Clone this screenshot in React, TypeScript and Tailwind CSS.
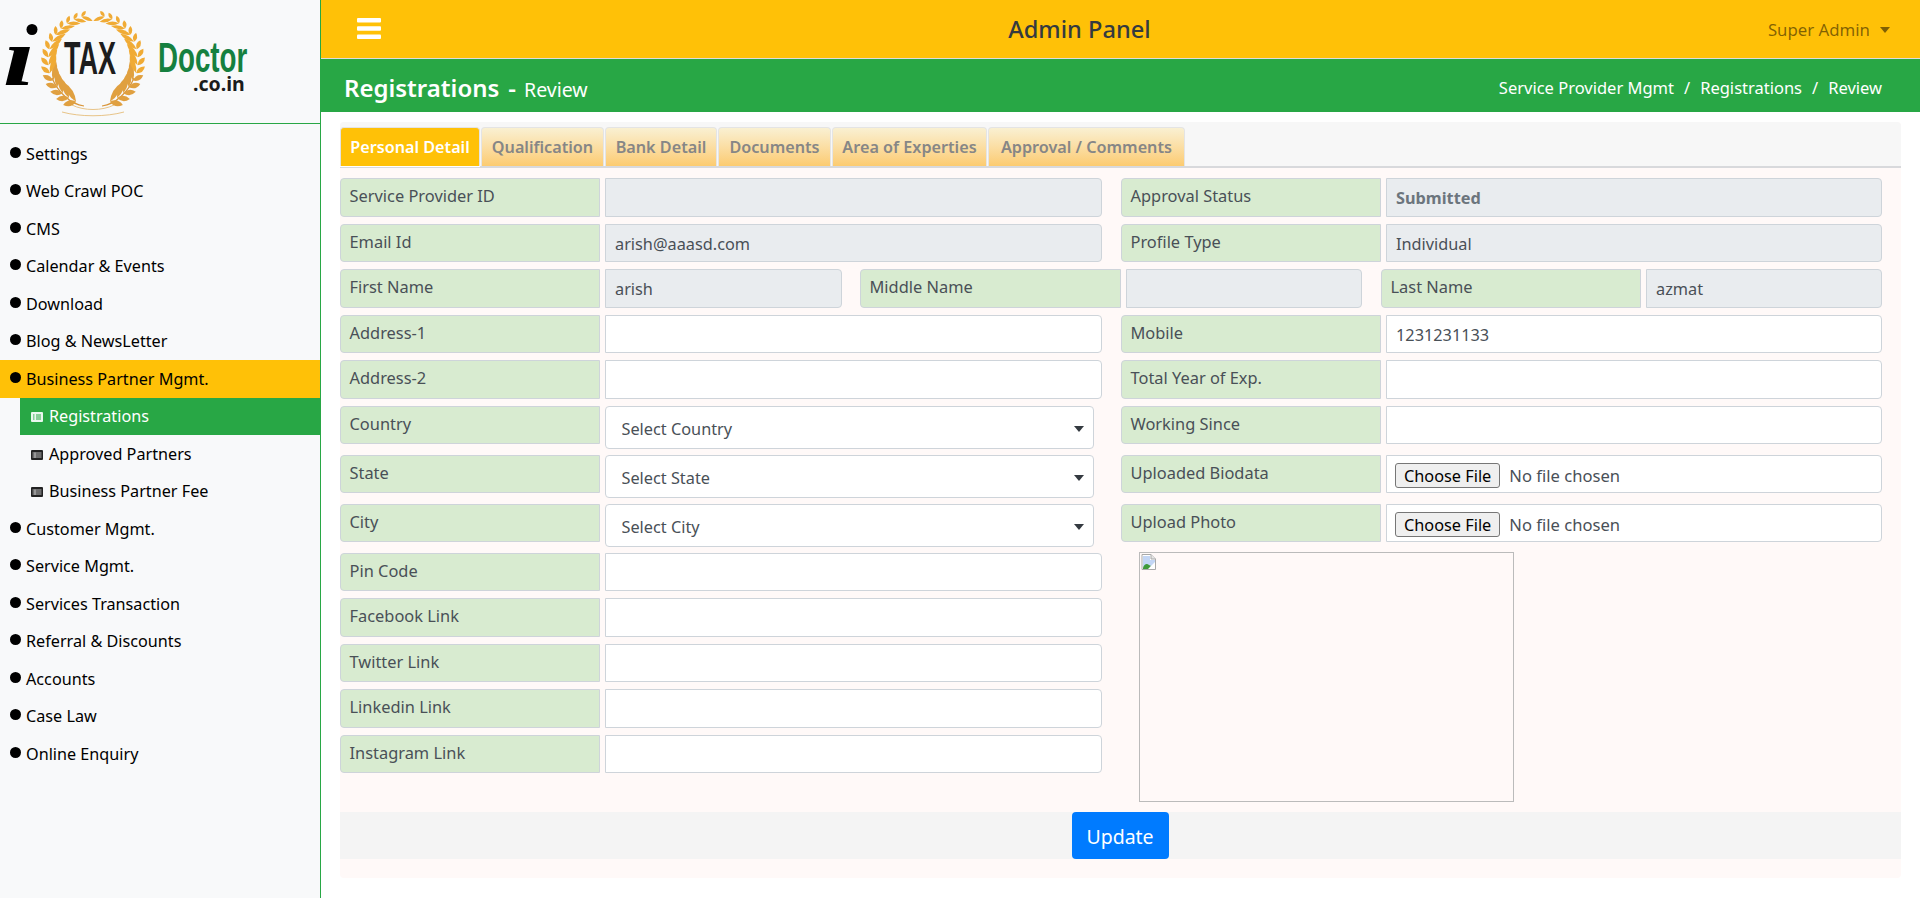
import React from "react";

const FONT = "[font-family:'Noto_Sans','Open_Sans',sans-serif]";

const menu: { label: string; active?: boolean; children?: { label: string; active?: boolean }[] }[] = [
  { label: "Settings" },
  { label: "Web Crawl POC" },
  { label: "CMS" },
  { label: "Calendar & Events" },
  { label: "Download" },
  { label: "Blog & NewsLetter" },
  {
    label: "Business Partner Mgmt.",
    active: true,
    children: [{ label: "Registrations", active: true }, { label: "Approved Partners" }, { label: "Business Partner Fee" }],
  },
  { label: "Customer Mgmt." },
  { label: "Service Mgmt." },
  { label: "Services Transaction" },
  { label: "Referral & Discounts" },
  { label: "Accounts" },
  { label: "Case Law" },
  { label: "Online Enquiry" },
];

const tabs = [
  { label: "Personal Detail", w: "w-[140px]", active: true },
  { label: "Qualification", w: "w-[123px]" },
  { label: "Bank Detail", w: "w-[112px]" },
  { label: "Documents", w: "w-[113px]" },
  { label: "Area of Experties", w: "w-[155px]" },
  { label: "Approval / Comments", w: "w-[197px]" },
];

function Wreath() {
  const cx = 93;
  const cy = 60;
  const r = 45;
  const leaves: React.ReactNode[] = [];
  const n = 15;
  for (const side of [1, -1]) {
    for (let i = 0; i < n; i++) {
      const deg = 22 + (i * 143) / (n - 1);
      const th = (deg * Math.PI) / 180;
      const x = cx + side * r * Math.sin(th);
      const y = cy + r * Math.cos(th);
      const tan = (Math.atan2(-Math.sin(th), side * Math.cos(th)) * 180) / Math.PI;
      const L = 23 - (i * 11) / (n - 1);
      const W = 5.6 - (i * 2.2) / (n - 1);
      const fill = i < 5 ? "#e0a040" : "#f0ab35";
      for (const outer of [true, false]) {
        const off = (outer ? -36 : 36) * side;
        const len = outer ? L : L * 0.58;
        leaves.push(
          <path
            key={`${side}-${i}-${outer}`}
            d={`M0 0Q${len / 2} ${-W} ${len} 0Q${len / 2} ${W} 0 0Z`}
            fill={fill}
            transform={`translate(${x.toFixed(1)} ${y.toFixed(1)}) rotate(${(tan + off).toFixed(1)})`}
          />
        );
      }
    }
  }
  return (
    <g>
      <path d="M84 106C70 104 58 92 52 78M102 106C116 104 128 92 134 78" stroke="#d9963a" strokeWidth="1.2" fill="none" />
      <path d="M62 112C80 117 106 117 124 112M72 105C84 111 102 111 114 105" stroke="#e8c488" strokeWidth="1" fill="none" />
      {leaves}
    </g>
  );
}

function Logo() {
  return (
    <svg width="320" height="123" viewBox="0 0 320 123" className="block">
      <Wreath />
      <circle cx="32" cy="29.5" r="5.5" fill="#000" />
      <text transform="translate(3 85) scale(1.4 1)" fontFamily="'Liberation Serif',serif" fontWeight="700" fontStyle="italic" fontSize="82" fill="#000">
        ı
      </text>
      <text transform="translate(64 74) scale(0.587 1)" fontFamily="'Liberation Sans',sans-serif" fontWeight="700" fontSize="46" fill="#1d1d1d">
        TAX
      </text>
      <text transform="translate(158 72) scale(0.66 1)" fontFamily="'Liberation Sans',sans-serif" fontWeight="700" fontSize="42" fill="#15803f">
        Doctor
      </text>
      <text x="193" y="91" fontFamily="'Noto Sans',sans-serif" fontWeight="700" fontSize="19.5" fill="#1b1b1b">
        .co.in
      </text>
    </svg>
  );
}

function TableIcon({ light }: { light?: boolean }) {
  return (
    <svg width="12" height="10" viewBox="0 0 12 10" className="shrink-0 mt-[2px]">
      <rect x="0" y="0" width="12" height="10" rx="1" fill={light ? "#e9f7ee" : "#222"} />
      {light ? (
        <path d="M2 3h1.5M5 3h5M2 5h1.5M5 5h5M2 7h1.5M5 7h5" stroke="#28a745" strokeWidth="1" />
      ) : (
        <path d="M1.5 3h9M1.5 5h9M1.5 7h9M4 2.5v5.5" stroke="#ccc" strokeWidth="0.9" />
      )}
    </svg>
  );
}

function Sidebar() {
  return (
    <aside className="w-[321px] shrink-0 h-[898px] bg-[#f8f9fa] border-r border-[#28a745]">
      <div className="h-[124px] border-b border-[#28a745]">
        <Logo />
      </div>
      <nav className="pt-[11px] text-[16.2px] text-black">
        {menu.map((m) => (
          <div key={m.label}>
            <div className={`h-[37.5px] flex items-center pl-[10px] ${m.active ? "bg-[#ffc107]" : ""}`}>
              <span className="w-[11px] h-[11px] rounded-full bg-black mr-[5px] mb-[3px] shrink-0" />
              <span>{m.label}</span>
            </div>
            {m.children?.map((c) => (
              <div
                key={c.label}
                className={`h-[37.5px] ml-[20px] flex items-center pl-[11px] gap-[6px] ${c.active ? "bg-[#28a745] text-white" : ""}`}
              >
                <TableIcon light={c.active} />
                <span>{c.label}</span>
              </div>
            ))}
          </div>
        ))}
      </nav>
    </aside>
  );
}

function Label({ children, className = "" }: { children: React.ReactNode; className?: string }) {
  return (
    <div className={`h-[38.5px] bg-[#d8ebd0] border border-[#ced4da] rounded-l-[4px] pl-[8.5px] pb-[1px] flex items-center text-[16.4px] text-[#495057] whitespace-nowrap ${className}`}>
      {children}
    </div>
  );
}

function Box({ value = "", disabled, bold, className = "" }: { value?: string; disabled?: boolean; bold?: boolean; className?: string }) {
  return (
    <input
      readOnly
      value={value}
      className={`h-[38.5px] min-w-0 border border-[#ced4da] rounded-r-[4px] px-[9px] pt-[2px] text-[16.3px] outline-none ${bold ? "font-bold text-[#6c757d]" : "text-[#495057]"} ${disabled ? "bg-[#e9ecef]" : "bg-white"} ${className}`}
    />
  );
}

function Row({ label, value, disabled, bold, tall }: { label: string; value?: string; disabled?: boolean; bold?: boolean; tall?: boolean }) {
  return (
    <div className={`flex gap-[5px] ${tall ? "h-[49px]" : "mb-[7px]"}`}>
      <Label className="w-[260px] shrink-0">{label}</Label>
      <Box value={value} disabled={disabled} bold={bold} className="flex-1" />
    </div>
  );
}

function SelectRow({ label, placeholder }: { label: string; placeholder: string }) {
  return (
    <div className="flex gap-[5px] h-[49px] items-start">
      <Label className="w-[260px] shrink-0">{label}</Label>
      <div className="relative w-[489px] h-[43.5px]">
        <select className="appearance-none w-full h-full border border-[#ced4da] rounded-[4px] bg-white pl-[15.5px] pt-[3px] text-[16.3px] text-[#495057] outline-none">
          <option>{placeholder}</option>
        </select>
        <span className="absolute right-[10px] top-[20px] w-0 h-0 border-x-[5px] border-x-transparent border-t-[6px] border-t-[#343a40] pointer-events-none" />
      </div>
    </div>
  );
}

function FileRow({ label }: { label: string }) {
  return (
    <div className="flex gap-[5px] h-[49px] items-start">
      <Label className="w-[260px] shrink-0">{label}</Label>
      <div className="flex-1 h-[38.5px] border border-[#ced4da] rounded-r-[4px] bg-white pl-[8px] pt-[4px] flex items-center">
        <input
          type="file"
          className="text-[#495057] text-[16.6px] w-full file:mr-[9px] file:px-[8px] file:h-[25px] file:border file:border-[#767676] file:rounded-[3px] file:bg-[#efefef] file:text-black file:text-[16.3px]"
        />
      </div>
    </div>
  );
}

function BrokenImage() {
  return (
    <svg width="16" height="16" viewBox="0 0 16 16" className="block ml-[1px] mt-[1px]">
      <path d="M1 0.5h9l4.5 4.5v10.5h-13.5z" fill="#fff" stroke="#a9a9a9" />
      <path d="M10 0.5v4.5h4.5" fill="#e5e5e5" stroke="#a9a9a9" />
      <path d="M2 2h7v4h5v3l-5 5H2z" fill="#c3d6f5" />
      <path d="M2 14c1-4 4-5 6-3l2 1-2 3H2z" fill="#3f9a3a" />
      <path d="M7 15l7-7v2l-5 5z" fill="#fff" />
    </svg>
  );
}

function Form() {
  return (
    <div className="flex gap-[19px] pt-[10px] pr-[19px]">
      <div className="w-[762px] shrink-0">
        <Row label="Service Provider ID" disabled />
        <Row label="Email Id" value="arish@aaasd.com" disabled />
        <div className="mb-[7px] flex">
          <div className="flex gap-[5px] w-[502px] shrink-0">
            <Label className="w-[260px] shrink-0">First Name</Label>
            <Box value="arish" disabled className="w-[237px]" />
          </div>
          <div className="flex gap-[5px] w-[521px] shrink-0 ml-[18px]">
            <Label className="w-[261px] shrink-0">Middle Name</Label>
            <Box disabled className="w-[236px]" />
          </div>
        </div>
        <Row label="Address-1" />
        <Row label="Address-2" />
        <SelectRow label="Country" placeholder="Select Country" />
        <SelectRow label="State" placeholder="Select State" />
        <SelectRow label="City" placeholder="Select City" />
        <Row label="Pin Code" />
        <Row label="Facebook Link" />
        <Row label="Twitter Link" />
        <Row label="Linkedin Link" />
        <Row label="Instagram Link" />
      </div>
      <div className="flex-1 min-w-0">
        <Row label="Approval Status" value="Submitted" disabled bold />
        <Row label="Profile Type" value="Individual" disabled />
        <div className="mb-[7px] flex justify-end gap-[5px]">
          <Label className="w-[260px] shrink-0">Last Name</Label>
          <Box value="azmat" disabled className="w-[236px]" />
        </div>
        <Row label="Mobile" value="1231231133" />
        <Row label="Total Year of Exp." />
        <Row label="Working Since" tall />
        <FileRow label="Uploaded Biodata" />
        <FileRow label="Upload Photo" />
        <div className="ml-[18px] -mt-[1px] w-[375px] h-[250px] border border-[#bbb]">
          <BrokenImage />
        </div>
      </div>
    </div>
  );
}

export default function App() {
  return (
    <div className={`flex w-[1920px] h-[898px] overflow-hidden bg-white text-[16px] ${FONT}`}>
      <Sidebar />
      <main className="flex-1 min-w-0">
        <header className="h-[59px] bg-[#ffc107] border-b border-[#dcdcdc] flex items-center justify-between pl-[36px] pr-[30px]">
          <svg width="24" height="21" viewBox="0 0 24 21" fill="#fff" className="mb-[2px]">
            <rect x="0" y="0" width="24" height="4.4" rx="1" />
            <rect x="0" y="8.3" width="24" height="4.4" rx="1" />
            <rect x="0" y="16.6" width="24" height="4.4" rx="1" />
          </svg>
          <h1 className="text-[23.6px] font-medium text-[#343a40] ml-[10px] mt-[2px]">Admin Panel</h1>
          <div className="flex items-center gap-[10px] text-[16.8px] text-black/50 mt-[1px]">
            <span>Super Admin</span>
            <span className="w-0 h-0 border-x-[5px] border-x-transparent border-t-[6px] border-t-black/50" />
          </div>
        </header>
        <div className="h-[53px] bg-[#28a745] flex items-center justify-between pl-[23px] pr-[38px] text-white pt-[5px]">
          <div className="flex items-baseline gap-[9px]">
            <span className="text-[24px] font-semibold">Registrations</span>
            <span className="text-[24px] font-semibold">-</span>
            <span className="text-[19.5px] -ml-[1px]">Review</span>
          </div>
          <div className="flex gap-[10px] text-[16.5px]">
            <span>Service Provider Mgmt</span>
            <span>/</span>
            <span>Registrations</span>
            <span>/</span>
            <span>Review</span>
          </div>
        </div>
        <section className="ml-[19px] mt-[10px] w-[1561px] h-[756px] bg-[#fff9f8] rounded-[4px] flex flex-col">
          <div className="h-[46px] shrink-0 bg-[#f7f7f7] border-b-2 border-[#d8d9dc] pt-[5px] flex gap-[1px] items-stretch rounded-t-[4px]">
            {tabs.map((t) => (
              <div
                key={t.label}
                className={`${t.w} flex items-center justify-center rounded-t-[4px] text-[16.2px] font-semibold border border-b-0 border-[#e4e4e4] ${
                  t.active ? "bg-[#ffc107] text-white shadow-[0_1px_0_#fff]" : "bg-gradient-to-b from-[#f9f0d2] to-[#fccb70] text-[#868686]"
                }`}
              >
                {t.label}
              </div>
            ))}
          </div>
          <div className="h-[644px] shrink-0">
            <Form />
          </div>
          <div className="h-[47px] shrink-0 w-full bg-[#f4f4f4] flex justify-center">
            <button className="w-[97px] h-[47px] bg-[#007bff] text-white text-[19.5px] rounded-[4px] mr-[1px] pt-[2px]">Update</button>
          </div>
        </section>
      </main>
    </div>
  );
}
